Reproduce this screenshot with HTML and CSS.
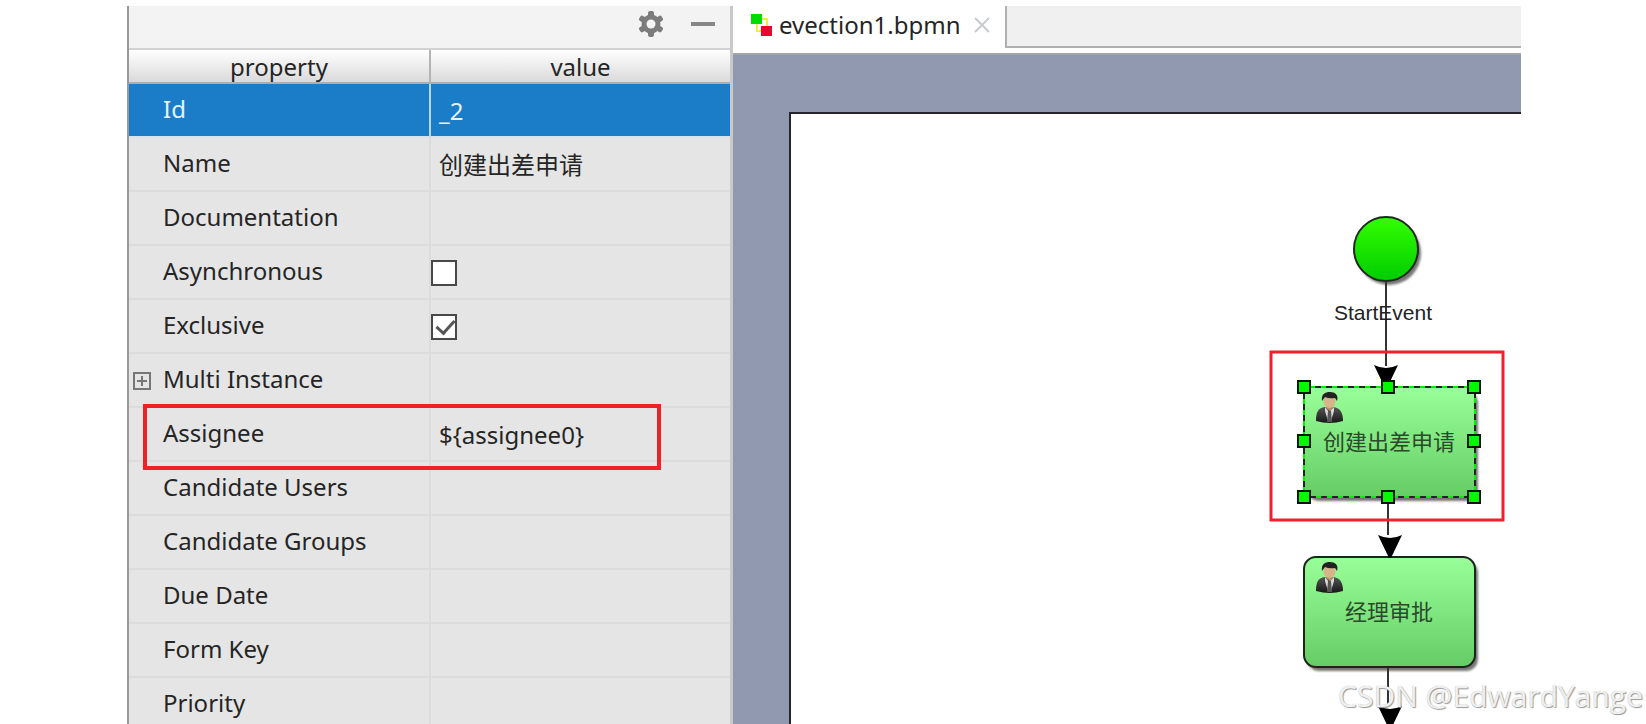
FILE: index.html
```html
<!DOCTYPE html>
<html lang="zh-CN">
<head>
<meta charset="utf-8">
<title>evection1.bpmn</title>
<link rel="stylesheet" href="styles.css">
</head>
<body>
<main class="ide">
  <section class="panel" aria-label="Properties">
    <div class="toolbar">
      <button class="tool" type="button" aria-label="Settings">
        <svg width="26" height="28" viewBox="0 0 26 28">
          <g fill="#7c7c7c">
            <circle cx="13" cy="14" r="9.5"/>
            <rect x="10" y="1" width="6" height="26" rx="2"/>
            <rect x="10" y="1" width="6" height="26" rx="2" transform="rotate(60 13 14)"/>
            <rect x="10" y="1" width="6" height="26" rx="2" transform="rotate(120 13 14)"/>
          </g>
          <circle cx="13" cy="14" r="4.5" fill="#f3f3f3"/>
        </svg>
      </button>
      <button class="tool" type="button" aria-label="Hide">
        <svg width="26" height="28" viewBox="0 0 26 28"><path d="M1 14h24" stroke="#868686" stroke-width="4"/></svg>
      </button>
    </div>
    <table class="props">
      <thead><tr><th>property</th><th>value</th></tr></thead>
      <tbody>
        <tr class="selected"><td>Id</td><td>_2</td></tr>
        <tr><td>Name</td><td>创建出差申请</td></tr>
        <tr><td>Documentation</td><td></td></tr>
        <tr><td><label for="async">Asynchronous</label></td><td class="check"><input id="async" type="checkbox"></td></tr>
        <tr><td><label for="excl">Exclusive</label></td><td class="check"><input id="excl" type="checkbox" checked></td></tr>
        <tr><td class="expandable"><button class="expand" type="button" aria-label="Expand"><svg width="18" height="18" viewBox="0 0 18 18"><path d="M1 1h16v16H1zM4 9h10M9 4v10" fill="none" stroke="#777" stroke-width="2"/></svg></button>Multi Instance</td><td></td></tr>
        <tr><td>Assignee</td><td>${assignee0}</td></tr>
        <tr><td>Candidate Users</td><td></td></tr>
        <tr><td>Candidate Groups</td><td></td></tr>
        <tr><td>Due Date</td><td></td></tr>
        <tr><td>Form Key</td><td></td></tr>
        <tr><td>Priority</td><td></td></tr>
      </tbody>
    </table>
    <div class="callout"></div>
  </section>
  <section class="editor" aria-label="Editor">
    <div class="tabs">
      <div class="tab">
        <svg width="24" height="24" viewBox="0 0 24 24">
          <path d="M10 6h6v7M6 10v8h6" fill="none" stroke="#e6f23c" stroke-width="2"/>
          <path d="M0 1h11v10H0z" fill="#00dc00"/><path d="M10 13h11v10H10z" fill="#e8062e"/>
        </svg>
        <span>evection1.bpmn</span>
        <button class="close" type="button" aria-label="Close tab"><svg width="18" height="18" viewBox="0 0 18 18"><path d="M2 2l14 14M16 2L2 16" stroke="#c8cbce" stroke-width="2"/></svg></button>
      </div>
      <div class="tabfill"></div>
    </div>
    <div class="canvas">
      <div class="sheet">
        <svg class="diagram" width="730" height="614" viewBox="0 0 730 614">
          <defs>
            <linearGradient id="start" x1="0" y1="0" x2="0" y2="1"><stop offset="0" stop-color="#33ff00"/><stop offset="1" stop-color="#00cc00"/></linearGradient>
            <linearGradient id="task" x1="0" y1="0" x2="0" y2="1"><stop offset="0" stop-color="#99ff99"/><stop offset="1" stop-color="#66cc66"/></linearGradient>
            <linearGradient id="suit" x1="0" y1="0" x2="0" y2="1"><stop offset="0" stop-color="#555"/><stop offset="1" stop-color="#171717"/></linearGradient>
            <filter id="soft" x="-10%" y="-10%" width="120%" height="120%"><feGaussianBlur stdDeviation="1"/></filter>
            <path id="arrow" d="M-12 0Q0 6 12 0L1 23h-2z"/>
            <g id="user">
              <path d="M0 29c0-9 2-13 9-14h8c7 1 10 5 10 14q-13 4-27 0z" fill="url(#suit)"/>
              <path d="M9 15l4 5 5-5 0 4-3 10h-3L9 19z" fill="#d9d9d9"/>
              <path d="M12 19h3l1 11h-5z" fill="#555"/>
              <path d="M10 11h7v5l-3 3-4-3z" fill="#b48f68"/>
              <ellipse cx="13.500" cy="9" rx="6" ry="7" fill="#d8b48b"/>
              <path d="M6 9C5 2 9 0 14 0s9 3 7 9l-2-3q-6 1-10-1z" fill="#222"/>
            </g>
          </defs>
          <circle cx="598" cy="139" r="32" fill="#555" filter="url(#soft)" opacity=".8"/>
          <circle cx="595" cy="135" r="32" fill="url(#start)" stroke="#202820" stroke-width="2"/>
          <path d="M595 167v85" stroke="#333" stroke-width="2"/>
          <use href="#arrow" x="595" y="251"/>
          <text class="event-name" x="592" y="206">StartEvent</text>

          <rect x="516" y="277" width="171" height="110" rx="12" fill="#555" filter="url(#soft)" opacity=".8"/>
          <rect x="513" y="273" width="171" height="110" rx="12" fill="url(#task)"/>
          <rect x="513" y="273" width="171" height="110" fill="none" stroke="#00f000" stroke-width="2"/>
          <rect x="513" y="273" width="171" height="110" fill="none" stroke="#222" stroke-width="2" stroke-dasharray="6 5"/>
          <use href="#user" x="525" y="278"/>
          <text class="task-name" x="598" y="336">创建出差申请</text>
          <path d="M597 389v32" stroke="#333" stroke-width="2"/>
          <g fill="#00fa00" stroke="#001800" stroke-width="2">
            <path d="M507 267h12v12h-12zM591 267h12v12h-12zM677 267h12v12h-12z"/>
            <path d="M507 321h12v12h-12zM677 321h12v12h-12z"/>
            <path d="M507 377h12v12h-12zM591 377h12v12h-12zM677 377h12v12h-12z"/>
          </g>

          <rect x="516" y="447" width="171" height="110" rx="12" fill="#555" filter="url(#soft)" opacity=".8"/>
          <rect x="513" y="443" width="171" height="110" rx="12" fill="url(#task)" stroke="#1c241c" stroke-width="2"/>
          <use href="#arrow" x="599" y="421"/>
          <use href="#user" x="525" y="448"/>
          <text class="task-name" x="598" y="506">经理审批</text>
          <path d="M597 554v38" stroke="#333" stroke-width="2"/>
          <use href="#arrow" x="599" y="592"/>
          <rect x="480" y="238" width="232" height="168" fill="none" stroke="#f0202a" stroke-width="3"/>
        </svg>
      </div>
    </div>
  </section>
</main>
<div class="watermark">CSDN @EdwardYange</div>
</body>
</html>
```
FILE: styles.css
```css
* { box-sizing: border-box; }

body {
  margin: 0;
  height: 100vh;
  overflow: hidden;
  position: relative;
  background: #fff;
  color: #252525;
  font-family: "Noto Sans", "Noto Sans CJK SC", sans-serif;
  font-size: 24px;
}

button {
  display: flex;
  padding: 0;
  border: 0;
  background: none;
}

.ide {
  display: flex;
  height: 100%;
  padding: 6px 125px 0 127px;
}

.panel {
  position: relative;
  flex: 0 0 606px;
  overflow: hidden;
  border-left: 2px solid #999;
  border-right: 3px solid #c9c9c9;
  background: #e5e5e5;
}

.toolbar {
  display: flex;
  align-items: center;
  justify-content: flex-end;
  gap: 26px;
  height: 44px;
  padding: 0 14px 6px 0;
  border-bottom: 2px solid #d2d2d2;
  background: #f3f3f3;
}

.props {
  width: 100%;
  table-layout: fixed;
  border-collapse: separate;
  border-spacing: 0;
}

.props th {
  height: 34px;
  padding: 2px 0 0;
  border-bottom: 2px solid #adadad;
  background: linear-gradient(#fff, #dadada);
  font-weight: 400;
  line-height: 28px;
}

.props th:first-child,
.props td:first-child { width: 302px; border-right: 2px solid #dcdcdc; }
.props th:first-child { border-right-color: #b4b4b4; }

.props td {
  height: 54px;
  padding: 2px 0 0 8px;
  border-bottom: 2px solid #dcdcdc;
  line-height: 32px;
  white-space: nowrap;
}

.props td:first-child { padding: 0 0 2px 34px; }
.props td.check { padding: 2px 0 0; }

.props .selected td {
  border-bottom-color: #d8e3ea;
  background: #1b7dc7;
  background-clip: padding-box;
  color: #e6f2fb;
}

.props .selected td:first-child { border-right-color: #c4d4df; }

.check input {
  display: block;
  position: relative;
  width: 26px;
  height: 26px;
  margin: 0;
  appearance: none;
  border: 2px solid #484848;
  background: #fff;
}

.check input:checked::after {
  content: "";
  position: absolute;
  left: 7px;
  top: 0;
  width: 8px;
  height: 15px;
  border: solid #555;
  border-width: 0 3px 3px 0;
  transform: rotate(42deg);
}

.expandable { position: relative; }

.expand {
  position: absolute;
  left: 4px;
  top: 18px;
}

.callout {
  position: absolute;
  left: 14px;
  top: 398px;
  width: 518px;
  height: 66px;
  border: 4px solid #ee2028;
}

.editor {
  flex: 1;
  display: flex;
  flex-direction: column;
  min-width: 0;
}

.tabs {
  display: flex;
  height: 49px;
  border-bottom: 2px solid #a5a5a5;
}

.tab {
  display: flex;
  align-items: center;
  width: 272px;
  padding: 0 14px 10px 18px;
  line-height: 32px;
}

.tab span { margin-left: 4px; }
.close { margin-left: auto; }

.tabfill {
  flex: 1;
  height: 42px;
  border-left: 2px solid #b0b0b0;
  border-bottom: 2px solid #b0b0b0;
  background: #f0f0f0;
}

.canvas {
  flex: 1;
  min-height: 0;
  padding: 57px 0 0 56px;
  background: #9099af;
}

.sheet {
  height: 100%;
  overflow: hidden;
  border-top: 2px solid #26262c;
  border-left: 2px solid #26262c;
  background: #fff;
}

.diagram { display: block; }

.event-name {
  fill: #222;
  font-family: "Liberation Sans", sans-serif;
  font-size: 21px;
  text-anchor: middle;
}

.task-name {
  fill: #2a4a2a;
  font-family: "Noto Sans CJK SC", sans-serif;
  font-size: 22px;
  text-anchor: middle;
}

.watermark {
  position: absolute;
  right: 3px;
  bottom: 10px;
  color: rgba(255, 255, 255, .85);
  font-family: "Open Sans", sans-serif;
  font-size: 30px;
  line-height: 36px;
  text-shadow: 1px 1px 1px #999, 0 0 1px #aaa;
}
```
